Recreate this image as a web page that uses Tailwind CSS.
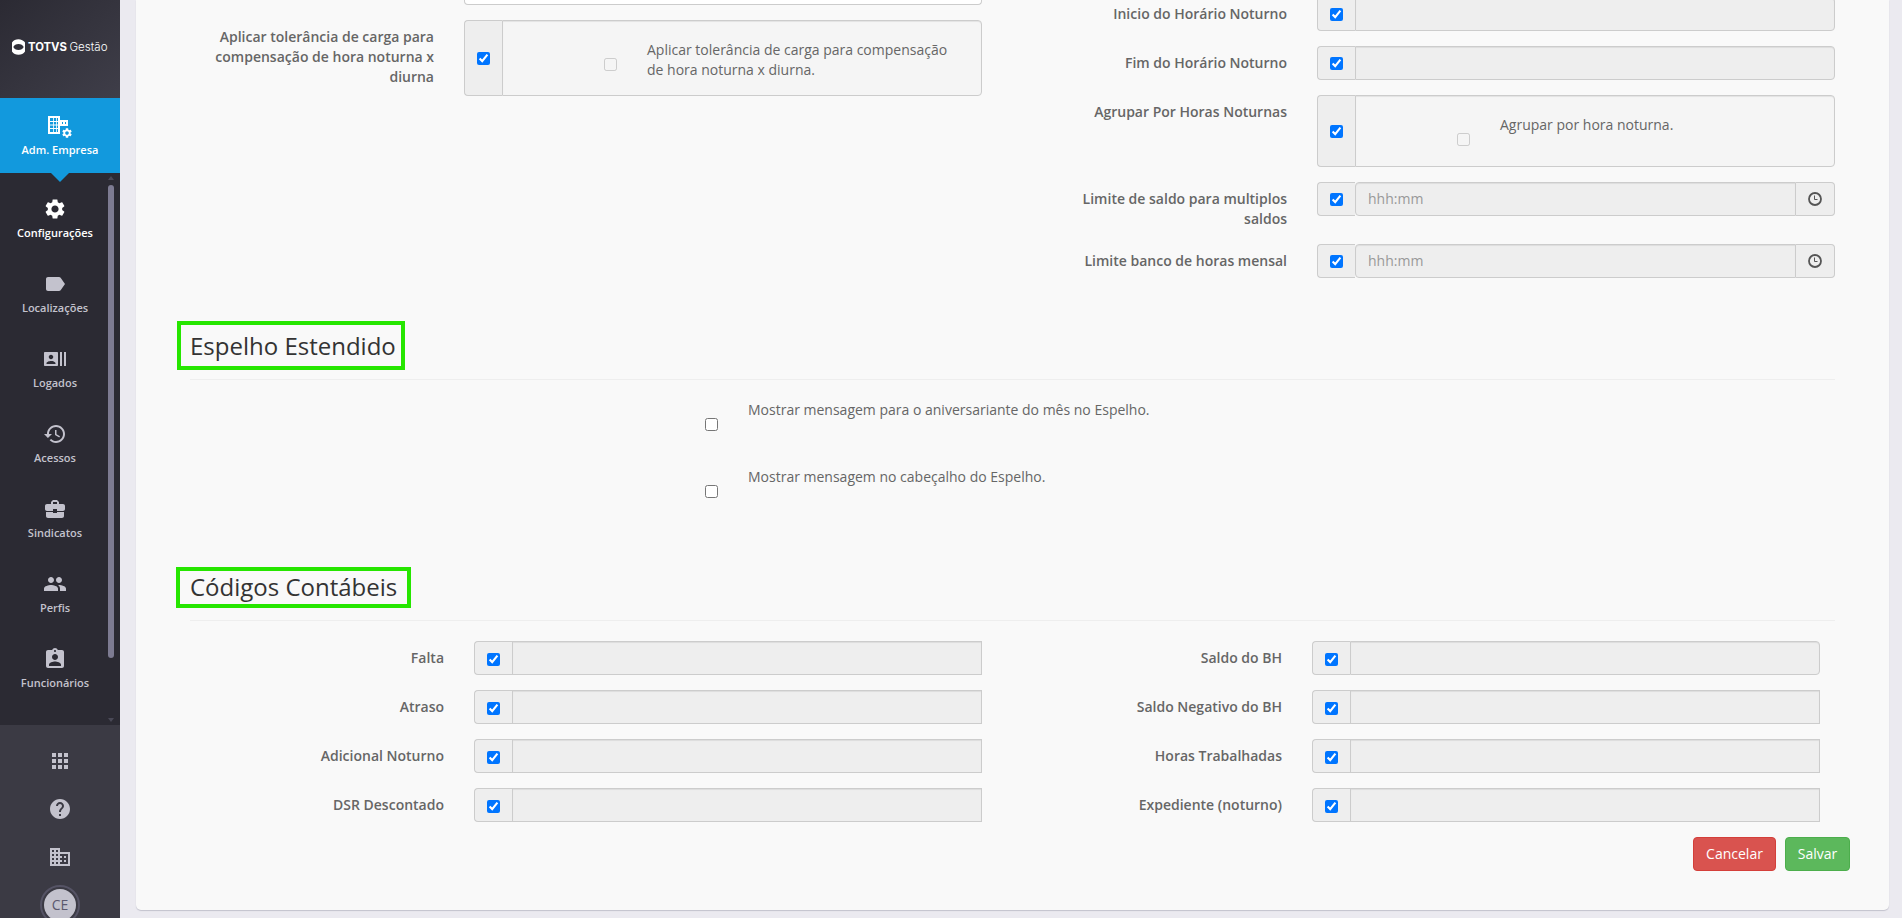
<!doctype html>
<html lang="pt-BR">

<head>
  <meta charset="utf-8">
  <title>TOTVS Gestão - Configurações</title>
  <meta name="viewport" content="width=device-width, initial-scale=1">
  <script src="https://cdn.jsdelivr.net/npm/@tailwindcss/browser@4"></script>
</head>

<body class="flex h-screen overflow-hidden bg-[#ebeaf0] font-['Open_Sans',sans-serif] text-sm text-[#666]">

  <!-- sidebar -->
  <aside class="flex w-[120px] shrink-0 flex-col bg-[#3b3a44]">
    <div class="flex h-[98px] shrink-0 items-center justify-center bg-linear-to-br from-[#2b2a33] to-[#3f3e49]">
      <svg class="mt-[-4px] h-5 w-24" viewBox="0 0 96 20" fill="#fff">
        <path fill-rule="evenodd" d="M6.5 2.2C9 2.2 10.800 3.200 12.200 4.600L13 5.500V14.500C11.500 16.700 9.300 17.800 6.500 17.800S1.500 16.700 0 14.500V5.500C1.500 3.300 3.800 2.200 6.500 2.200zM6.500 7C4 7 2.200 8.200 1.300 10C2.200 11.800 4 13 6.500 13S10.800 11.800 11.700 10C10.800 8.200 9 7 6.500 7z"/>
        <text x="16" y="14" font-family="Inter, sans-serif" font-size="12" font-weight="700" textLength="39" lengthAdjust="spacingAndGlyphs">TOTVS</text>
        <text x="57.500" y="14" font-family="Inter, sans-serif" font-size="12" font-weight="300" textLength="38" lengthAdjust="spacingAndGlyphs">Gestão</text>
      </svg>
    </div>

    <a class="relative flex h-[75px] shrink-0 flex-col items-center bg-[#1299dd] pt-4 text-[11px] leading-4 font-semibold text-white">
      <svg class="size-6 overflow-visible" viewBox="0 0 24 24" fill="currentColor">
        <path fill-rule="evenodd" d="M0 2h12v4h8v6H12v8H0V2zM2 4v14h8V4H2zM14 8v2h1V8h-1zm3 0v2h1V8h-1z"/>
        <path d="M5 4h.8v14H5zM8 4h.8v14H8zM2 7h8v1H2zM2 10.500h8v1H2zM2 14h8v1H2z"/>
        <circle cx="19" cy="19" r="6.500" fill="#1299dd"/>
        <svg x="13" y="13" width="12" height="12" viewBox="0 0 24 24"><use href="#gear"/></svg>
      </svg>
      <span class="mt-1">Adm. Empresa</span>
      <svg class="absolute top-[75px] left-[51px] z-10 h-[9px] w-[18px]" viewBox="0 0 18 9" fill="#1299dd"><path d="M0 0h18L9 9z"/></svg>
    </a>

    <div class="relative h-[552px] shrink-0 overflow-hidden bg-[#2b2a33] pt-2">
      <nav class="flex w-[110px] flex-col text-[11px] leading-4 font-semibold text-[#c3c2cd]">
        <a class="flex h-[75px] flex-col items-center gap-1 pt-4 text-white">
          <svg class="size-6" viewBox="0 0 24 24" fill="currentColor"><path id="gear" d="M19.14 12.94c.04-.3.06-.61.06-.94 0-.32-.02-.64-.07-.94l2.03-1.58c.18-.14.23-.41.12-.61l-1.92-3.32c-.12-.22-.37-.29-.59-.22l-2.39.96c-.5-.38-1.03-.7-1.62-.94l-.36-2.54c-.04-.24-.24-.41-.48-.41h-3.84c-.24 0-.43.17-.47.41l-.36 2.54c-.59.24-1.13.57-1.62.94l-2.39-.96c-.22-.08-.47 0-.59.22L2.74 8.87c-.12.21-.08.47.12.61l2.03 1.58c-.05.3-.09.63-.09.94s.02.64.07.94l-2.03 1.58c-.18.14-.23.41-.12.61l1.92 3.32c.12.22.37.29.59.22l2.39-.96c.5.38 1.03.7 1.62.94l.36 2.54c.05.24.24.41.48.41h3.84c.24 0 .44-.17.47-.41l.36-2.54c.59-.24 1.13-.56 1.62-.94l2.39.96c.22.08.47 0 .59-.22l1.92-3.32c.12-.22.07-.47-.12-.61l-2.01-1.58zM12 15.600c-1.980 0-3.600-1.620-3.600-3.600s1.620-3.600 3.600-3.600 3.600 1.620 3.600 3.600-1.620 3.600-3.600 3.600z"/></svg>
          <span>Configurações</span>
        </a>
        <a class="flex h-[75px] flex-col items-center gap-1 pt-4">
          <svg class="size-6" viewBox="0 0 24 24" fill="currentColor"><path d="M17.63 5.84C17.27 5.33 16.67 5 16 5L5 5.010C3.900 5.010 3 5.900 3 7v10c0 1.100.9 1.990 2 1.990L16 19c.67 0 1.270-.33 1.630-.84L22 12l-4.370-6.160z"/></svg>
          <span>Localizações</span>
        </a>
        <a class="flex h-[75px] flex-col items-center gap-1 pt-4">
          <svg class="size-6" viewBox="0 0 24 24" fill="currentColor"><path d="M21 5v14h2V5h-2zm-4 14h2V5h-2v14zM14 5H2c-.55 0-1 .45-1 1v12c0 .55.45 1 1 1h12c.55 0 1-.45 1-1V6c0-.55-.45-1-1-1zM8 7.750c1.240 0 2.250 1.010 2.250 2.250S9.240 12.250 8 12.250 5.750 11.240 5.750 10 6.760 7.750 8 7.750zM12.500 17h-9v-.75c0-1.500 3-2.250 4.500-2.250s4.500.75 4.500 2.250V17z"/></svg>
          <span>Logados</span>
        </a>
        <a class="flex h-[75px] flex-col items-center gap-1 pt-4">
          <svg class="size-6" viewBox="0 0 24 24" fill="currentColor"><path d="M13 3c-4.970 0-9 4.030-9 9H1l3.890 3.890.07.14L9 12H6c0-3.870 3.130-7 7-7s7 3.130 7 7-3.130 7-7 7c-1.930 0-3.680-.79-4.940-2.060l-1.420 1.420C8.270 19.990 10.510 21 13 21c4.970 0 9-4.030 9-9s-4.030-9-9-9zm-1 5v5l4.280 2.540.72-1.210-3.500-2.080V8H12z"/></svg>
          <span>Acessos</span>
        </a>
        <a class="flex h-[75px] flex-col items-center gap-1 pt-4">
          <svg class="size-6" viewBox="0 0 24 24" fill="currentColor"><path d="M10 16v-1H3.010L3 19c0 1.110.89 2 2 2h14c1.110 0 2-.89 2-2v-4h-7v1h-4zm10-9h-4.010V5l-2-2h-4l-2 2v2H4c-1.100 0-2 .9-2 2v3c0 1.110.89 2 2 2h6v-2h4v2h6c1.100 0 2-.9 2-2V9c0-1.100-.9-2-2-2zm-6 0h-4V5h4v2z"/></svg>
          <span>Sindicatos</span>
        </a>
        <a class="flex h-[75px] flex-col items-center gap-1 pt-4">
          <svg class="size-6" viewBox="0 0 24 24" fill="currentColor"><path d="M16 11c1.660 0 2.990-1.340 2.990-3S17.660 5 16 5c-1.660 0-3 1.340-3 3s1.340 3 3 3zm-8 0c1.660 0 2.990-1.340 2.990-3S9.660 5 8 5C6.340 5 5 6.340 5 8s1.340 3 3 3zm0 2c-2.330 0-7 1.170-7 3.500V19h14v-2.500c0-2.330-4.670-3.500-7-3.500zm8 0c-.29 0-.62.02-.97.05 1.160.84 1.970 1.970 1.970 3.450V19h6v-2.500c0-2.330-4.670-3.500-7-3.500z"/></svg>
          <span>Perfis</span>
        </a>
        <a class="flex h-[75px] flex-col items-center gap-1 pt-4">
          <svg class="size-6" viewBox="0 0 24 24" fill="currentColor"><path d="M19 3h-4.180C14.400 1.840 13.300 1 12 1c-1.300 0-2.400.84-2.820 2H5c-1.100 0-2 .9-2 2v14c0 1.100.9 2 2 2h14c1.100 0 2-.9 2-2V5c0-1.100-.9-2-2-2zm-7 0c.55 0 1 .45 1 1s-.45 1-1 1-1-.45-1-1 .45-1 1-1zm0 4c1.660 0 3 1.340 3 3s-1.340 3-3 3-3-1.340-3-3 1.340-3 3-3zm6 12H6v-1.400c0-2 4-3.100 6-3.100s6 1.100 6 3.100V19z"/></svg>
          <span>Funcionários</span>
        </a>
      </nav>
      <!-- scrollbar -->
      <svg class="absolute top-[3px] left-[108px] h-1 w-1.5" viewBox="0 0 6 4" fill="#4a4957"><path d="M3 0l3 4H0z"/></svg>
      <div class="absolute top-3 left-[108px] h-[473px] w-1.5 rounded-full bg-[#7d7b92]"></div>
      <svg class="absolute top-[545px] left-[108px] h-1 w-1.5" viewBox="0 0 6 4" fill="#4a4957"><path d="M0 0h6L3 4z"/></svg>
    </div>

    <div class="flex flex-col items-center gap-6 pt-6 text-[#c3c2cd]">
      <svg class="size-6 shrink-0" viewBox="0 0 24 24" fill="currentColor"><path d="M4 8h4V4H4v4zm6 12h4v-4h-4v4zm-6 0h4v-4H4v4zm0-6h4v-4H4v4zm6 0h4v-4h-4v4zm6-10v4h4V4h-4zm-6 4h4V4h-4v4zm6 6h4v-4h-4v4zm0 6h4v-4h-4v4z"/></svg>
      <svg class="size-6 shrink-0" viewBox="0 0 24 24" fill="currentColor"><path d="M12 2C6.480 2 2 6.480 2 12s4.480 10 10 10 10-4.480 10-10S17.520 2 12 2zm1 17h-2v-2h2v2zm2.070-7.750l-.9.92C13.450 12.900 13 13.500 13 15h-2v-.5c0-1.100.45-2.100 1.170-2.830l1.240-1.260c.37-.36.59-.86.59-1.410 0-1.100-.9-2-2-2s-2 .9-2 2H8c0-2.210 1.790-4 4-4s4 1.790 4 4c0 .88-.36 1.680-.93 2.250z"/></svg>
      <svg class="size-6 shrink-0" viewBox="0 0 24 24" fill="currentColor"><path d="M12 7V3H2v18h20V7H12zM6 19H4v-2h2v2zm0-4H4v-2h2v2zm0-4H4V9h2v2zm0-4H4V5h2v2zm4 12H8v-2h2v2zm0-4H8v-2h2v2zm0-4H8V9h2v2zm0-4H8V5h2v2zm10 12h-8v-2h2v-2h-2v-2h2v-2h-2V9h8v10zm-2-8h-2v2h2v-2zm0 4h-2v2h2v-2z"/></svg>
      <div class="mt-[-8px] flex size-10 shrink-0 items-center justify-center rounded-full border-2 border-[#555365]">
        <div class="flex size-8 shrink-0 items-center justify-center rounded-full bg-[#c3c2cd] text-sm text-[#5a586e]">CE</div>
      </div>
    </div>
  </aside>

  <!-- content -->
  <main class="pl-4">
    <div class="flex h-[910px] w-[1753px] flex-col overflow-hidden rounded-b-[5px] bg-[#f9f9f9] shadow-[0_1px_1px_#c3c2cd]">

      <section class="flex h-[300px] shrink-0">
        <div class="w-[846px]">
          <div class="ml-[328px] h-[5px] rounded-b border border-t-0 border-[#ccc] bg-white"></div>
          <div class="mt-[15px] flex">
            <label class="mr-[30px] w-[298px] pt-[7px] pl-16 text-right font-semibold">Aplicar tolerância de carga para compensação de hora noturna x diurna</label>
            <div class="flex h-[76px] w-[518px]">
              <span class="flex w-[38px] items-center justify-center rounded-l border border-r-0 border-[#ccc] bg-[#eee]"><input class="size-[13px]" type="checkbox" checked></span>
              <div class="flex flex-1 items-start rounded-r border border-[#ccc] bg-[#f5f5f5] pt-[19px] pl-[101px] shadow-[inset_0_1px_1px_rgba(0,0,0,0.075)]">
                <input class="mt-[18px] size-[13px]" type="checkbox" disabled>
                <span class="ml-[30px] w-[310px]">Aplicar tolerância de carga para compensação de hora noturna x diurna.</span>
              </div>
            </div>
          </div>
        </div>

        <div class="mt-[-3px] ml-[70px] w-[783px]">
          <div class="mb-[15px] flex">
            <label class="mr-[30px] w-[235px] pt-[7px] text-right font-semibold">Inicio do Horário Noturno</label>
            <div class="flex h-[34px] w-[518px]">
              <span class="flex w-[38px] items-center justify-center rounded-l border border-r-0 border-[#ccc] bg-[#eee]"><input class="mt-px size-[13px]" type="checkbox" checked></span>
              <input class="flex-1 rounded-r border border-[#ccc] bg-[#eee] px-3 shadow-[inset_0_1px_1px_rgba(0,0,0,0.075)]" type="text" disabled>
            </div>
          </div>
          <div class="mb-[15px] flex">
            <label class="mr-[30px] w-[235px] pt-[7px] text-right font-semibold">Fim do Horário Noturno</label>
            <div class="flex h-[34px] w-[518px]">
              <span class="flex w-[38px] items-center justify-center rounded-l border border-r-0 border-[#ccc] bg-[#eee]"><input class="mt-px size-[13px]" type="checkbox" checked></span>
              <input class="flex-1 rounded-r border border-[#ccc] bg-[#eee] px-3 shadow-[inset_0_1px_1px_rgba(0,0,0,0.075)]" type="text" disabled>
            </div>
          </div>
          <div class="mb-[15px] flex">
            <label class="mr-[30px] w-[235px] pt-[7px] text-right font-semibold">Agrupar Por Horas Noturnas</label>
            <div class="flex h-[72px] w-[518px]">
              <span class="flex w-[38px] items-center justify-center rounded-l border border-r-0 border-[#ccc] bg-[#eee]"><input class="mt-px size-[13px]" type="checkbox" checked></span>
              <div class="flex flex-1 items-start rounded-r border border-[#ccc] bg-[#f5f5f5] pt-[19px] pl-[101px] shadow-[inset_0_1px_1px_rgba(0,0,0,0.075)]">
                <input class="mt-[18px] size-[13px]" type="checkbox" disabled>
                <span class="ml-[30px]">Agrupar por hora noturna.</span>
              </div>
            </div>
          </div>
          <div class="mb-[15px] flex">
            <label class="mr-[30px] w-[235px] pt-[7px] pl-5 text-right font-semibold">Limite de saldo para multiplos saldos</label>
            <div class="flex h-[34px] w-[518px]">
              <span class="flex w-[38px] items-center justify-center rounded-l border border-r-0 border-[#ccc] bg-[#eee]"><input class="mt-px size-[13px]" type="checkbox" checked></span>
              <input class="flex-1 rounded-l border border-[#ccc] bg-[#eee] px-3 shadow-[inset_0_1px_1px_rgba(0,0,0,0.075)] placeholder:text-[#999]" type="text" placeholder="hhh:mm" disabled>
              <span class="flex w-[39px] items-center justify-center rounded-r border border-l-0 border-[#ccc] bg-[#eee]">
                <svg class="size-3.5" viewBox="0 0 14 14" fill="none" stroke="#555"><circle cx="7" cy="7" r="6" stroke-width="1.8"/><path d="M6.500 3.500v4h3"/></svg>
              </span>
            </div>
          </div>
          <div class="flex">
            <label class="mr-[30px] w-[235px] pt-[7px] text-right font-semibold">Limite banco de horas mensal</label>
            <div class="flex h-[34px] w-[518px]">
              <span class="flex w-[38px] items-center justify-center rounded-l border border-r-0 border-[#ccc] bg-[#eee]"><input class="mt-px size-[13px]" type="checkbox" checked></span>
              <input class="flex-1 rounded-l border border-[#ccc] bg-[#eee] px-3 shadow-[inset_0_1px_1px_rgba(0,0,0,0.075)] placeholder:text-[#999]" type="text" placeholder="hhh:mm" disabled>
              <span class="flex w-[39px] items-center justify-center rounded-r border border-l-0 border-[#ccc] bg-[#eee]">
                <svg class="size-3.5" viewBox="0 0 14 14" fill="none" stroke="#555"><circle cx="7" cy="7" r="6" stroke-width="1.8"/><path d="M6.500 3.500v4h3"/></svg>
              </span>
            </div>
          </div>
        </div>
      </section>

      <!-- Espelho Estendido -->
      <section class="mr-[54px] ml-[54px] h-[268px] shrink-0 pt-[29px]">
        <div class="relative">
          <h2 class="text-2xl leading-[33px] text-[#333]">Espelho Estendido</h2>
          <div class="absolute top-[-8px] left-[-13px] h-[49px] w-[228px] border-4 border-[#26e600]"></div>
        </div>
        <hr class="mt-[17px] border-[#eee]">
        <div class="mt-5 ml-[515px] flex items-start">
          <input class="mt-[18px] size-[13px]" type="checkbox">
          <span class="ml-[30px]">Mostrar mensagem para o aniversariante do mês no Espelho.</span>
        </div>
        <div class="mt-9 ml-[515px] flex items-start">
          <input class="mt-[18px] size-[13px]" type="checkbox">
          <span class="ml-[30px]">Mostrar mensagem no cabeçalho do Espelho.</span>
        </div>
      </section>

      <!-- Códigos Contábeis -->
      <section class="mr-[54px] ml-[54px] shrink-0 pt-[2px]">
        <div class="relative">
          <h2 class="text-2xl leading-[33px] text-[#333]">Códigos Contábeis</h2>
          <div class="absolute top-[-3px] left-[-14px] h-[41px] w-[235px] border-4 border-[#26e600]"></div>
        </div>
        <hr class="mt-[17px] border-[#eee]">
        <div class="mt-5 flex">
          <div class="flex w-[792px] flex-col gap-[15px]">
            <div class="flex">
              <label class="mr-[30px] w-[254px] pt-[7px] text-right font-semibold">Falta</label>
              <div class="flex h-[34px] w-[508px]">
                <span class="flex w-[38px] items-center justify-center rounded-l border border-r-0 border-[#ccc] bg-[#eee]"><input class="mt-[3px] size-[13px]" type="checkbox" checked></span>
                <input class="flex-1 border border-[#ccc] bg-[#eee] px-3 shadow-[inset_0_1px_1px_rgba(0,0,0,0.075)]" type="text" disabled>
              </div>
            </div>
            <div class="flex">
              <label class="mr-[30px] w-[254px] pt-[7px] text-right font-semibold">Atraso</label>
              <div class="flex h-[34px] w-[508px]">
                <span class="flex w-[38px] items-center justify-center rounded-l border border-r-0 border-[#ccc] bg-[#eee]"><input class="mt-[3px] size-[13px]" type="checkbox" checked></span>
                <input class="flex-1 border border-[#ccc] bg-[#eee] px-3 shadow-[inset_0_1px_1px_rgba(0,0,0,0.075)]" type="text" disabled>
              </div>
            </div>
            <div class="flex">
              <label class="mr-[30px] w-[254px] pt-[7px] text-right font-semibold">Adicional Noturno</label>
              <div class="flex h-[34px] w-[508px]">
                <span class="flex w-[38px] items-center justify-center rounded-l border border-r-0 border-[#ccc] bg-[#eee]"><input class="mt-[3px] size-[13px]" type="checkbox" checked></span>
                <input class="flex-1 border border-[#ccc] bg-[#eee] px-3 shadow-[inset_0_1px_1px_rgba(0,0,0,0.075)]" type="text" disabled>
              </div>
            </div>
            <div class="flex">
              <label class="mr-[30px] w-[254px] pt-[7px] text-right font-semibold">DSR Descontado</label>
              <div class="flex h-[34px] w-[508px]">
                <span class="flex w-[38px] items-center justify-center rounded-l border border-r-0 border-[#ccc] bg-[#eee]"><input class="mt-[3px] size-[13px]" type="checkbox" checked></span>
                <input class="flex-1 border border-[#ccc] bg-[#eee] px-3 shadow-[inset_0_1px_1px_rgba(0,0,0,0.075)]" type="text" disabled>
              </div>
            </div>
          </div>

          <div class="ml-[46px] flex w-[792px] flex-col gap-[15px]">
            <div class="flex">
              <label class="mr-[30px] w-[254px] pt-[7px] text-right font-semibold">Saldo do BH</label>
              <div class="flex h-[34px] w-[508px]">
                <span class="flex w-[38px] items-center justify-center rounded-l border border-r-0 border-[#ccc] bg-[#eee]"><input class="mt-[3px] size-[13px]" type="checkbox" checked></span>
                <input class="flex-1 rounded-r border border-[#ccc] bg-[#eee] px-3 shadow-[inset_0_1px_1px_rgba(0,0,0,0.075)]" type="text" disabled>
              </div>
            </div>
            <div class="flex">
              <label class="mr-[30px] w-[254px] pt-[7px] text-right font-semibold">Saldo Negativo do BH</label>
              <div class="flex h-[34px] w-[508px]">
                <span class="flex w-[38px] items-center justify-center rounded-l border border-r-0 border-[#ccc] bg-[#eee]"><input class="mt-[3px] size-[13px]" type="checkbox" checked></span>
                <input class="flex-1 border border-[#ccc] bg-[#eee] px-3 shadow-[inset_0_1px_1px_rgba(0,0,0,0.075)]" type="text" disabled>
              </div>
            </div>
            <div class="flex">
              <label class="mr-[30px] w-[254px] pt-[7px] text-right font-semibold">Horas Trabalhadas</label>
              <div class="flex h-[34px] w-[508px]">
                <span class="flex w-[38px] items-center justify-center rounded-l border border-r-0 border-[#ccc] bg-[#eee]"><input class="mt-[3px] size-[13px]" type="checkbox" checked></span>
                <input class="flex-1 border border-[#ccc] bg-[#eee] px-3 shadow-[inset_0_1px_1px_rgba(0,0,0,0.075)]" type="text" disabled>
              </div>
            </div>
            <div class="flex">
              <label class="mr-[30px] w-[254px] pt-[7px] text-right font-semibold">Expediente (noturno)</label>
              <div class="flex h-[34px] w-[508px]">
                <span class="flex w-[38px] items-center justify-center rounded-l border border-r-0 border-[#ccc] bg-[#eee]"><input class="mt-[3px] size-[13px]" type="checkbox" checked></span>
                <input class="flex-1 border border-[#ccc] bg-[#eee] px-3 shadow-[inset_0_1px_1px_rgba(0,0,0,0.075)]" type="text" disabled>
              </div>
            </div>
          </div>
        </div>
      </section>

      <div class="mt-[15px] mr-[39px] flex justify-end gap-[9px] text-white">
        <button class="h-[34px] w-[83px] rounded border border-[#d43f3a] bg-[#d9534f]">Cancelar</button>
        <button class="h-[34px] w-[65px] rounded border border-[#4cae4c] bg-[#5cb85c]">Salvar</button>
      </div>
    </div>
  </main>
</body>

</html>
